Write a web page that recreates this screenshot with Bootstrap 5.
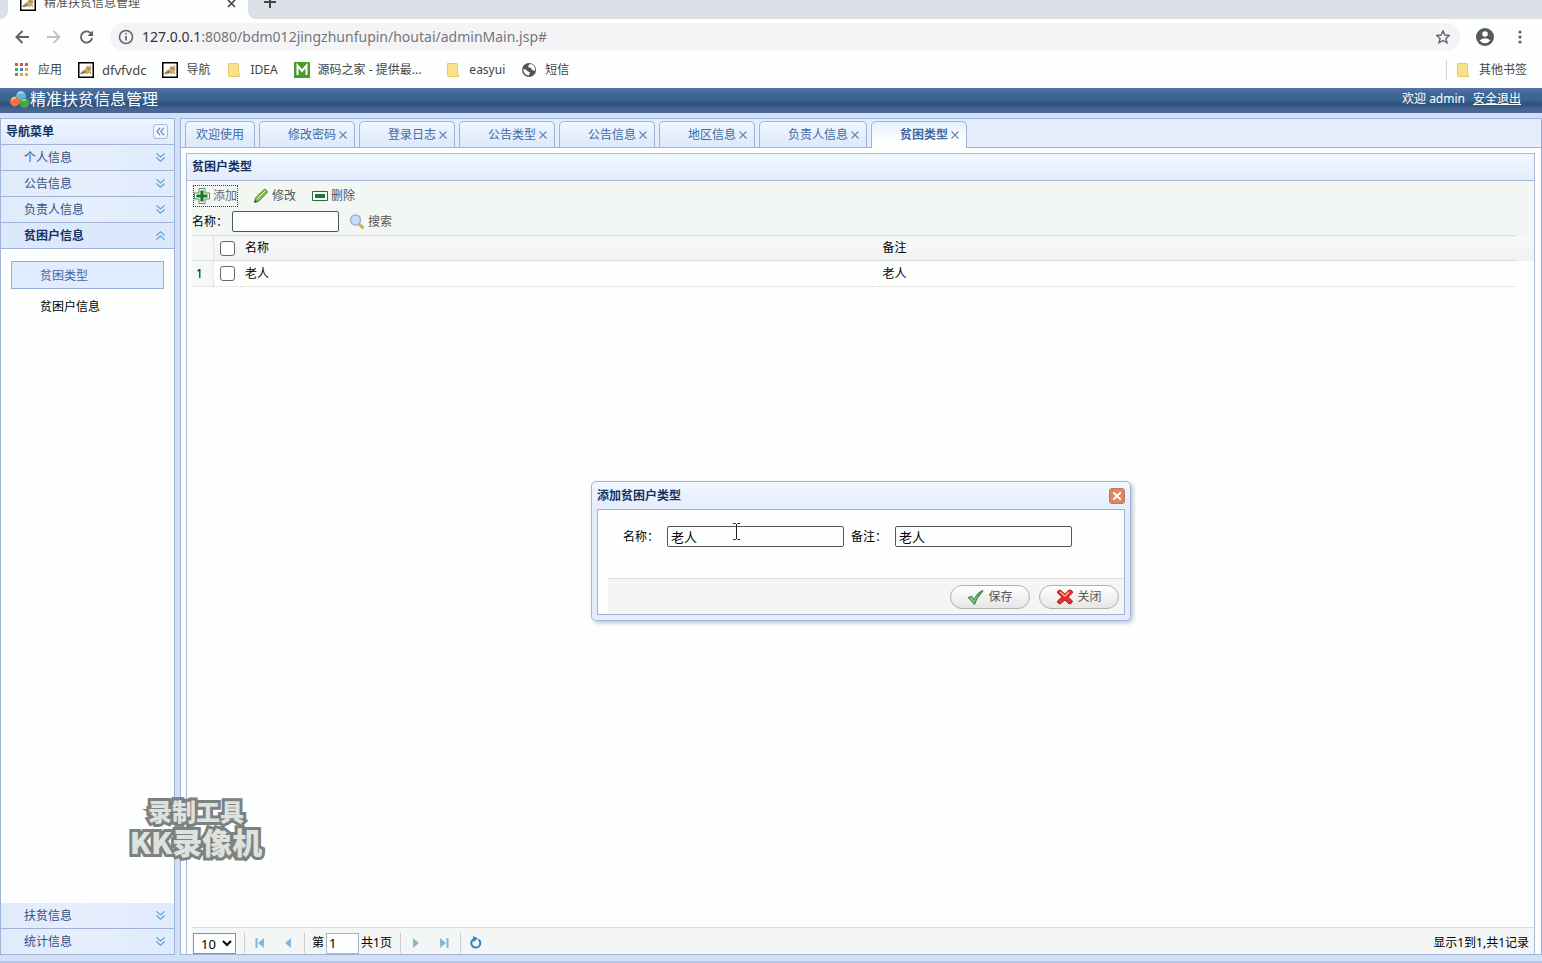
<!DOCTYPE html>
<html lang="zh-CN">
<head>
<meta charset="utf-8">
<meta name="viewport" content="width=device-width, initial-scale=1">
<title>精准扶贫信息管理</title>
<link href="https://cdn.jsdelivr.net/npm/bootstrap@5.3.0/dist/css/bootstrap.min.css" rel="stylesheet">
<style>
:root{--line:#9fb3d9;--text:#416aa3;--navy:#15315f}
body{font:12px/20px "Noto Sans","Noto Sans CJK SC",sans-serif;color:#000;background:#fdfffe}
button,input,select{font-family:inherit;font-size:inherit;color:inherit;border:0;background:none;padding:0}
a{color:inherit;text-decoration:none}
svg{flex:none;display:block}
/* browser frame */
.strip{height:19px;background:linear-gradient(#dbdfe8,#dee2e5)}
.edge{width:8px;height:19px;background:#fdfffe}
.edge i{display:block;height:19px;background:#dcdfe6}
.edge.lft i{border-radius:0 0 8px 0}
.edge.rgt i{border-radius:0 0 0 8px}
.btab{width:240px;height:32px;background:#fdfffe;padding:0 8px 0 12px;color:#555}
.plus{margin-left:8px}
.addr{height:36px;padding:0 16px 0 15px;color:#5f6368}
.addr .gap-i{margin-left:18px}
.omni{height:28px;border-radius:14px;background:#f4f4f7;padding:0 10px 0 4px;font-size:14px;color:#74767a}
.omni b{font-weight:400;color:#333}
.marks{height:33px;padding:0 15px 4px 14px;color:#444}
.marks .lat{font-size:13px}
.marks .vr{height:20px;align-self:center}
.fav{width:16px;height:16px}
/* application */
.apphead{height:25px;padding:0 21px 4px 9px;color:#fff;background:linear-gradient(#5a72a6 0,#3a6494 25%,#3b6892 45%,#2c4f7c 65%,#46658f 85%,#47679a 100%)}
.apphead .ttl{font-size:16px}
.work{background:#d2e0f7;padding:5px 0 6px;border-bottom:2px solid #b5c9e6}
.west{width:175px;border:1px solid var(--line);border-bottom:0;background:#fdfffe}
.bar{height:26px;border-bottom:1px solid var(--line);background:linear-gradient(90deg,#dfeafb,#e7effe 50%,#dfeafd);color:#32507f;padding:0 8px 0 23px;width:100%;text-align:left}
.bar.top{background:linear-gradient(#eff6ff,#e0ebfd);padding:0 6px 0 5px;color:var(--navy);font-weight:700}
.bar.on{color:var(--navy);font-weight:700;background:#dce9fd}
.fold{width:15px;height:15px;border:1px solid #a5bde2;border-radius:3px;background:#edf4ff}
.sub{padding:12px 10px;gap:3px}
.sub a{height:28px;padding-left:28px;border:1px solid transparent;line-height:28px}
.sub a.on{border-color:#97acd8;background:#e2ecff;color:var(--text)}
.center{margin-left:5px;border:1px solid var(--line);background:#fdfffe;min-width:0}
.tabs{height:29px;background:#e6edfc;border-bottom:1px solid var(--line);padding:2px 4px 0;gap:4px;flex:none}
.tabs button{height:26px;border:1px solid var(--line);border-bottom:0;border-radius:5px 5px 0 0;background:linear-gradient(#eff7ff,#dce8fb);color:var(--text);padding:0 10px}
.tabs .shut{padding:0 7px 0 28px;gap:3px}
.tabs .on{height:27px;background:linear-gradient(#e4effd,#fdfffe 70%);font-weight:700}
.pane{margin:5px 6px 0 5px;border:1px solid #a9b9d8;border-bottom:0}
.pane-t{height:27px;border-bottom:1px solid #aab9d6;background:linear-gradient(#f1f8ff,#e4ecfc);color:var(--navy);font-weight:700;padding-left:5px;line-height:26px}
.tools{margin-left:5px;background:#f3f7f4;height:54px;color:#555;padding-top:5px}
.tools .row-a{padding-left:2px;margin-bottom:5px;gap:16px}
.tools .row-b{gap:4px}
.tools .find{margin-left:6px}
.tools .line-in{width:107px}
.tools label{color:#000}
.lbtn{height:20px;gap:3px}
.lbtn.foc{outline:1px dotted #24406f;outline-offset:0;color:#667}
.line-in{height:21px;border:1px solid #555;border-radius:2px;background:#fdfffe}
.gridwrap{margin-left:5px;background:linear-gradient(#f8f9f7,#f0f1f2) 0 0/100% 26px no-repeat}
.grid{width:calc(100% - 18px);table-layout:fixed;background:#fdfffe}
.grid th,.grid td{font-weight:400;padding:0 4px;height:25px}
.grid td{height:26px}
.grid .c-num{width:21px}
.grid .c-box{width:28px}
.grid thead tr{border-top:1px solid #dcdedc;border-bottom:1px solid #dcdedc;background:linear-gradient(#f8f9f7,#f0f1f2)}
.grid tbody tr{border-bottom:1px dotted #d4d4d4}
.grid .num{border-right:1px dotted #d4d4d4;background:#f6f8f6}
.grid input{width:15px;height:15px;display:block;margin:0 0 0 2px;appearance:none;border:1px solid #666;border-radius:3px;background:#fff}
.pager{margin-left:5px;height:27px;border-top:1px solid #dcdedc;background:#f4f6f5;padding:4px 5px 0 1px}
.pager .vr{background:#ccc;opacity:1;height:20px;align-self:center;margin:0 7px 0 8px}
.pager select{width:43px;height:21px;border:1px solid #8592a8;background:#fdfffe;font-size:13px;padding-left:3px}
.pager input{width:33px;height:21px;border:1px solid #a3b6d0;background:#fdfffe;font-size:13px;padding-left:2px;margin:0 2px}
.pager button{width:16px;height:16px}
.pager button+button{margin-left:12px}
/* window floating over the grid */
.dlg{position:absolute;left:50%;top:362px;width:540px;margin-left:-270px;height:140px;border:1px solid #9db4dc;border-radius:5px;background:linear-gradient(#f0f7ff,#e5edfd 20%);padding:0 5px 5px;box-shadow:2px 2px 4px #bcc0cc}
.dlg-t{height:27px;color:var(--navy);font-weight:700}
.dlg-b{border:1px solid var(--line);background:#fdfffe}
.dlg-r{padding:16px 0 0 25px}
.dlg-b .line-in{width:177px;font-size:13px;padding:0 3px;margin:0 7px 0 8px}
.dlg-f{height:36px;margin-left:10px;border-top:1px solid #ddd;background:#f4f5f5;padding-right:5px;gap:9px}
.pill{width:80px;height:24px;border:1px solid #b0b0b0;border-radius:12px;background:linear-gradient(#fff,#e6e6e6);color:#555;gap:3px}
.shutw{width:16px;height:16px;border-radius:3px;background:#dd8762;border:1px solid #c07a5e}
.caret{position:absolute;left:551px;top:404px}
.stamp{position:absolute;left:128px;top:796px;width:136px;text-align:center;font-family:"Noto Sans CJK SC",sans-serif;font-weight:900;font-size:24px;line-height:30px;color:#dde2df;-webkit-text-stroke:6px #7d817f;stroke-linejoin:round;paint-order:stroke fill;pointer-events:none;white-space:nowrap}
.stamp div+div{font-size:30px}
</style>
</head>
<body class="vh-100 d-flex flex-column overflow-hidden position-relative">
<svg width="0" height="0" class="position-absolute">
<symbol id="dn" viewBox="0 0 12 12"><path d="M1.500 1.500 6 5.500l4.500-4M1.500 6 6 10l4.500-4" fill="none" stroke="#5b9fd6" stroke-width="1.300"/></symbol>
<symbol id="cat" viewBox="0 0 16 16"><path d="M.750.750h14.500v14.500H.750z" fill="#fff" stroke="#000" stroke-width="1.500"/><path d="M2.500 11.500q2-3.500 5-4L9 4l1 1.500L12.500 3.500l.5 4-1 1.500 1 3-2-1.500L9 12l-1.500-1.500L5 12z" fill="#d3ac68" stroke="#9a7a48" stroke-width=".5"/><path d="M3 11.500 7 9.500M9.500 6.500l2 .5M6 11l2-1.500" stroke="#5c5140" stroke-width=".8"/></symbol>
<symbol id="fold" viewBox="0 0 16 16"><path d="M2.500 1.500h9q1 0 1 1V11q1.500 1 1 3.500H3.500q-1 0-1-1z" fill="#fbe08c" stroke="#ecc665"/></symbol>
<symbol id="x" viewBox="0 0 8 8"><path d="m.5.5 7 7m0-7-7 7" stroke="#6684b0" stroke-width="1.100"/></symbol>
</svg>

<header>
 <div class="strip d-flex align-items-end overflow-hidden">
  <div class="edge lft"><i></i></div>
  <div class="btab d-flex align-items-center"><svg class="fav"><use href="#cat"/></svg><span class="ms-2 me-auto">精准扶贫信息管理</span>
   <svg width="9" height="9" viewBox="0 0 9 9" class="me-1"><path d="m1 1 7 7m0-7-7 7" stroke="#444" stroke-width="1.600"/></svg></div>
  <div class="edge rgt"><i></i></div>
  <svg class="plus" width="12" height="32" viewBox="0 0 12 32"><path d="M6 9v12M0 15h12" stroke="#444" stroke-width="2"/></svg>
 </div>
 <div class="addr d-flex align-items-center">
  <svg width="14" height="14" viewBox="0 0 14 14"><path d="M14 7H1.500M7.500 1l-6 6 6 6" fill="none" stroke="#5f6368" stroke-width="2"/></svg>
  <svg class="gap-i" width="14" height="14" viewBox="0 0 14 14"><path d="M0 7h12.500M6.500 1l6 6-6 6" fill="none" stroke="#c0c3c6" stroke-width="1.800"/></svg>
  <svg class="gap-i" width="15" height="16" viewBox="0 0 16 16"><path d="M13 4.500A6 6 0 1 0 14 9" fill="none" stroke="#5f6368" stroke-width="2"/><path d="M15 1v6H9z" fill="#5f6368"/></svg>
  <div class="omni d-flex align-items-center flex-grow-1 ms-3 me-3">
   <svg width="16" height="16" viewBox="0 0 16 16" class="ms-1 me-2"><circle cx="8" cy="8" r="6.500" fill="none" stroke="#5f6368" stroke-width="1.500"/><path d="M8 7v4.500M8 4v1.600" stroke="#5f6368" stroke-width="1.600"/></svg>
   <span class="me-auto"><b>127.0.0.1</b>:8080/bdm012jingzhunfupin/houtai/adminMain.jsp#</span>
   <svg width="14" height="14" viewBox="0 0 16 16"><path d="m8 1 2.100 4.700 5.100.5-3.900 3.400 1.200 5L8 12l-4.500 2.600 1.200-5L.8 6.200l5.100-.5z" fill="none" stroke="#5f6368" stroke-width="1.600"/></svg>
  </div>
  <svg width="18" height="18" viewBox="0 0 18 18"><circle cx="9" cy="9" r="9" fill="#55585d"/><circle cx="9" cy="6" r="2.800" fill="#fff"/><path d="M3.500 12.500Q9 8 14.500 12.500 9 18 3.500 12.500" fill="#fff"/></svg>
  <svg class="gap-i ms-4 me-1" width="4" height="14" viewBox="0 0 4 14"><g fill="#5f6368"><circle cx="2" cy="2" r="1.600"/><circle cx="2" cy="7" r="1.600"/><circle cx="2" cy="12" r="1.600"/></g></svg>
 </div>
 <nav class="marks d-flex align-items-center">
  <a href="#" class="d-flex align-items-center"><svg class="fav me-2" viewBox="0 0 16 16"><g fill="#c95c47"><path d="M1 1h3v3H1zM6 1h3v3H6zM11 1h3v3h-3z"/></g><path d="M1 6h3v3H1zM1 11h3v3H1z" fill="#4da559"/><path d="M6 6h3v3H6z" fill="#3b86c8"/><path d="M6 11h3v3H6zM11 6h3v3h-3zM11 11h3v3h-3z" fill="#e5a83b"/></svg>应用</a>
  <a href="#" class="d-flex align-items-center ms-3"><svg class="fav me-2"><use href="#cat"/></svg><span class="lat">dfvfvdc</span></a>
  <a href="#" class="d-flex align-items-center ms-3"><svg class="fav me-2"><use href="#cat"/></svg>导航</a>
  <a href="#" class="d-flex align-items-center ms-3"><svg class="fav me-2"><use href="#fold"/></svg>IDEA</a>
  <a href="#" class="d-flex align-items-center ms-3"><svg class="fav me-2" viewBox="0 0 16 16"><path d="M0 0h16v16H0z" fill="#4c9a2e"/><path d="M3.500 13V3.500L8 9l4.500-5.500V13" fill="none" stroke="#fff" stroke-width="2"/></svg>源码之家 - 提供最...</a>
  <a href="#" class="d-flex align-items-center ms-4"><svg class="fav me-2"><use href="#fold"/></svg>easyui</a>
  <a href="#" class="d-flex align-items-center ms-3 me-auto"><svg class="fav me-2" viewBox="0 0 16 16"><circle cx="8" cy="8" r="7" fill="#505357"/><path d="M2 7q3 0 4 1.500T9 10l-1 3.500Q3 13 2 7M8 2.500 7 5l3 1 1 2 3 1q.5-5-3.500-7z" fill="#fff"/></svg>短信</a>
  <span class="vr"></span>
  <a href="#" class="d-flex align-items-center ms-2"><svg class="fav me-2"><use href="#fold"/></svg>其他书签</a>
 </nav>
</header>

<div class="apphead d-flex align-items-center">
 <svg width="21" height="20" viewBox="0 0 21 20"><circle cx="12" cy="7" r="5" fill="#59b9e8"/><circle cx="6" cy="12.500" r="5" fill="#ee7440"/><circle cx="15.500" cy="14" r="5" fill="#43a64b"/><path d="M9 5q2-3 5-1M3 11q1-3 4-2M13 12q1-2 4-1" fill="none" stroke="#fff" stroke-opacity=".6" stroke-width="1.500"/></svg>
 <span class="ttl me-auto">精准扶贫信息管理</span><span>欢迎 admin</span><a href="#" class="ms-2 text-decoration-underline">安全退出</a>
</div>

<div class="work d-flex flex-grow-1">
 <aside class="west d-flex flex-column flex-shrink-0">
  <div class="bar top d-flex align-items-center justify-content-between">导航菜单<button class="fold d-flex align-items-center justify-content-center" aria-label="折叠"><svg width="9" height="9" viewBox="0 0 12 12"><path d="M5.500 1 1.500 6l4 5M10.500 1l-4 5 4 5" fill="none" stroke="#5577a8" stroke-width="1.500"/></svg></button></div>
  <button class="bar d-flex align-items-center justify-content-between">个人信息<svg width="11" height="11"><use href="#dn"/></svg></button>
  <button class="bar d-flex align-items-center justify-content-between">公告信息<svg width="11" height="11"><use href="#dn"/></svg></button>
  <button class="bar d-flex align-items-center justify-content-between">负责人信息<svg width="11" height="11"><use href="#dn"/></svg></button>
  <button class="bar on d-flex align-items-center justify-content-between">贫困户信息<svg width="11" height="11" viewBox="0 0 12 12"><path d="M1.500 6 6 2l4.500 4M1.500 10.500l4.500-4 4.500 4" fill="none" stroke="#5b9fd6" stroke-width="1.300"/></svg></button>
  <div class="sub d-flex flex-column flex-grow-1"><a href="#" class="on">贫困类型</a><a href="#">贫困户信息</a></div>
  <button class="bar d-flex align-items-center justify-content-between">扶贫信息<svg width="11" height="11"><use href="#dn"/></svg></button>
  <button class="bar d-flex align-items-center justify-content-between">统计信息<svg width="11" height="11"><use href="#dn"/></svg></button>
 </aside>

 <main class="center d-flex flex-column flex-grow-1 position-relative">
  <div class="tabs d-flex">
   <button>欢迎使用</button>
   <button class="shut d-flex align-items-center">修改密码<svg width="8" height="8"><use href="#x"/></svg></button>
   <button class="shut d-flex align-items-center">登录日志<svg width="8" height="8"><use href="#x"/></svg></button>
   <button class="shut d-flex align-items-center">公告类型<svg width="8" height="8"><use href="#x"/></svg></button>
   <button class="shut d-flex align-items-center">公告信息<svg width="8" height="8"><use href="#x"/></svg></button>
   <button class="shut d-flex align-items-center">地区信息<svg width="8" height="8"><use href="#x"/></svg></button>
   <button class="shut d-flex align-items-center">负责人信息<svg width="8" height="8"><use href="#x"/></svg></button>
   <button class="shut on d-flex align-items-center">贫困类型<svg width="8" height="8"><use href="#x"/></svg></button>
  </div>
  <section class="pane d-flex flex-column flex-grow-1">
   <div class="pane-t">贫困户类型</div>
   <div class="tools">
    <div class="row-a d-flex">
     <button class="lbtn foc d-flex align-items-center"><svg width="16" height="16" viewBox="0 0 16 16"><path d="M5 .500h6V5h4.500v6H11v4.500H5V11H.500V5H5z" fill="#fff" stroke="#4f9457"/><path d="M8 2.500v11M2.500 8h11" stroke="#187a24" stroke-width="3.200"/></svg>添加</button>
     <button class="lbtn d-flex align-items-center"><svg width="16" height="16" viewBox="0 0 16 16"><path d="m1.500 14.500 1-4.500 8.500-8.500q2.500-.5 3.500 2.500L6 13z" fill="#8cbf5b" stroke="#557a2b"/><path d="m4 11 8.500-8.500" stroke="#d8efae"/><path d="m1.500 14.500.7-3L4.500 14z" fill="#553"/></svg>修改</button>
     <button class="lbtn d-flex align-items-center"><svg width="16" height="16" viewBox="0 0 16 16"><path d="M.500 3.500h15v9H.500z" fill="#fff" stroke="#2b6a45"/><path d="M3 6h10v4H3z" fill="#187a34"/></svg>删除</button>
    </div>
    <div class="row-b d-flex align-items-center"><label for="q">名称：</label><input id="q" class="line-in">
     <button class="lbtn find d-flex align-items-center"><svg width="16" height="16" viewBox="0 0 16 16"><path d="m10 10 4.500 4.500" stroke="#d3ad55" stroke-width="3"/><circle cx="6.500" cy="6" r="5" fill="#c9dcf7" stroke="#a5b0cc" stroke-width="1.500"/></svg>搜索</button></div>
   </div>
   <div class="gridwrap"><table class="grid">
    <colgroup><col class="c-num"><col class="c-box"><col><col></colgroup>
    <thead><tr><th class="num"></th><th><input type="checkbox" aria-label="全选"></th><th>名称</th><th>备注</th></tr></thead>
    <tbody><tr><td class="num">1</td><td><input type="checkbox" aria-label="选择第1行"></td><td>老人</td><td>老人</td></tr></tbody>
   </table></div>
   <div class="pager d-flex align-items-center mt-auto">
    <select aria-label="每页记录"><option>10</option></select><span class="vr"></span>
    <button aria-label="首页"><svg width="16" height="16" viewBox="0 0 16 16"><path d="M4.500 3v10" stroke="#83b9dc" stroke-width="2"/><path d="M12 3v10L6 8z" fill="#83b9dc"/></svg></button>
    <button aria-label="上一页"><svg width="16" height="16" viewBox="0 0 16 16"><path d="M11 3v10L5 8z" fill="#83b9dc"/></svg></button>
    <span class="vr"></span><label for="pg">第</label><input id="pg" value="1"><span>共1页</span><span class="vr"></span>
    <button aria-label="下一页"><svg width="16" height="16" viewBox="0 0 16 16"><path d="M5 3v10l6-5z" fill="#83b9dc"/></svg></button>
    <button aria-label="末页"><svg width="16" height="16" viewBox="0 0 16 16"><path d="M11.500 3v10" stroke="#83b9dc" stroke-width="2"/><path d="M4 3v10l6-5z" fill="#83b9dc"/></svg></button>
    <span class="vr"></span>
    <button aria-label="刷新"><svg width="16" height="16" viewBox="0 0 16 16"><path d="M10.500 4.500A4.500 4.500 0 1 1 6 4" fill="none" stroke="#2f86c4" stroke-width="2"/><path d="m5 1 5 2.500L5.500 7z" fill="#2f86c4"/></svg></button>
    <span class="ms-auto">显示1到1,共1记录</span>
   </div>
  </section>

  <div class="dlg d-flex flex-column" role="dialog" aria-label="添加贫困户类型">
   <div class="dlg-t d-flex align-items-center justify-content-between">添加贫困户类型<button class="shutw d-flex align-items-center justify-content-center" aria-label="关闭窗口"><svg width="8" height="8" viewBox="0 0 8 8"><path d="m0 0 8 8m0-8L0 8" stroke="#fff" stroke-width="2"/></svg></button></div>
   <div class="dlg-b d-flex flex-column justify-content-between flex-grow-1">
    <div class="dlg-r d-flex align-items-center"><label for="n">名称：</label><input id="n" class="line-in" value="老人"><label for="r">备注：</label><input id="r" class="line-in" value="老人"></div>
    <div class="dlg-f d-flex align-items-center justify-content-end">
     <button class="pill d-flex align-items-center justify-content-center"><svg width="18" height="16" viewBox="0 0 18 16"><path d="m1.500 8.500 3-1L7 11Q10 4 16 1.500 10 8 7.500 15z" fill="#a6dda0" stroke="#3b8a43" stroke-width="1.200"/></svg>保存</button>
     <button class="pill d-flex align-items-center justify-content-center"><svg width="18" height="16" viewBox="0 0 18 16"><path d="m4 1 5 4 4-4q4 0 3.500 3L12 8l4.500 4q-.5 3-3.500 3L9 11l-5 4q-3-1-2.500-3L6 8 1.500 4Q1.500 1 4 1" fill="#e2322c" stroke="#b51e1c"/><path d="m4 3 5 4 4-4" fill="none" stroke="#ffb0a3" stroke-width="1.500"/></svg>关闭</button>
    </div>
   </div>
  </div>
  <svg class="caret" width="9" height="17" viewBox="0 0 9 17"><path d="M1 .500h2.500l1 1 1-1H8M4.500 1v15M1 16.500h2.500l1-1 1 1H8" fill="none" stroke="#222"/></svg>
 </main>
</div>
<div class="stamp"><div>录制工具</div><div>KK录像机</div></div>
<script src="https://cdn.jsdelivr.net/npm/bootstrap@5.3.0/dist/js/bootstrap.bundle.min.js"></script>
</body>
</html>
